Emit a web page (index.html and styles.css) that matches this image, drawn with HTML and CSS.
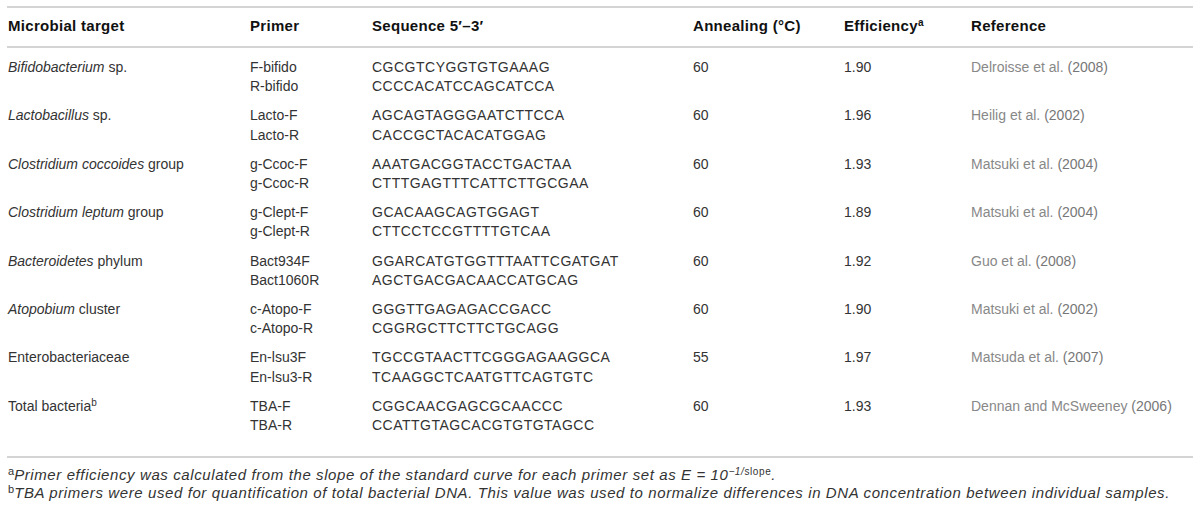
FILE: index.html
```html
<!doctype html>
<html>
<head>
    <title>Primers used for qPCR</title>
    <meta http-equiv="Content-Type" content="text/html; charset=utf-8" />
    <link rel="stylesheet" href="styles.css">
</head>
<body>
<table class="primers">
    <thead>
        <tr>
            <th class="c-target">Microbial target</th>
            <th class="c-primer">Primer</th>
            <th class="c-seq">Sequence 5&prime;&ndash;3&prime;</th>
            <th class="c-ann">Annealing (&deg;C)</th>
            <th class="c-eff">Efficiency<sup>a</sup></th>
            <th class="c-ref">Reference</th>
        </tr>
    </thead>
    <tbody>
        <tr class="first">
            <td><i>Bifidobacterium</i> sp.</td>
            <td>F-bifido<br/>R-bifido</td>
            <td class="seq">CGCGTCYGGTGTGAAAG<br/>CCCCACATCCAGCATCCA</td>
            <td>60</td>
            <td>1.90</td>
            <td class="ref">Delroisse et al. <span>(2008)</span></td>
        </tr>
        <tr>
            <td><i>Lactobacillus</i> sp.</td>
            <td>Lacto-F<br/>Lacto-R</td>
            <td class="seq">AGCAGTAGGGAATCTTCCA<br/>CACCGCTACACATGGAG</td>
            <td>60</td>
            <td>1.96</td>
            <td class="ref">Heilig et al. <span>(2002)</span></td>
        </tr>
        <tr>
            <td><i>Clostridium coccoides</i> group</td>
            <td>g-Ccoc-F<br/>g-Ccoc-R</td>
            <td class="seq">AAATGACGGTACCTGACTAA<br/>CTTTGAGTTTCATTCTTGCGAA</td>
            <td>60</td>
            <td>1.93</td>
            <td class="ref">Matsuki et al. <span>(2004)</span></td>
        </tr>
        <tr>
            <td><i>Clostridium leptum</i> group</td>
            <td>g-Clept-F<br/>g-Clept-R</td>
            <td class="seq">GCACAAGCAGTGGAGT<br/>CTTCCTCCGTTTTGTCAA</td>
            <td>60</td>
            <td>1.89</td>
            <td class="ref">Matsuki et al. <span>(2004)</span></td>
        </tr>
        <tr>
            <td><i>Bacteroidetes</i> phylum</td>
            <td>Bact934F<br/>Bact1060R</td>
            <td class="seq">GGARCATGTGGTTTAATTCGATGAT<br/>AGCTGACGACAACCATGCAG</td>
            <td>60</td>
            <td>1.92</td>
            <td class="ref">Guo et al. <span>(2008)</span></td>
        </tr>
        <tr>
            <td><i>Atopobium</i> cluster</td>
            <td>c-Atopo-F<br/>c-Atopo-R</td>
            <td class="seq">GGGTTGAGAGACCGACC<br/>CGGRGCTTCTTCTGCAGG</td>
            <td>60</td>
            <td>1.90</td>
            <td class="ref">Matsuki et al. <span>(2002)</span></td>
        </tr>
        <tr>
            <td>Enterobacteriaceae</td>
            <td>En-lsu3F<br/>En-lsu3-R</td>
            <td class="seq">TGCCGTAACTTCGGGAGAAGGCA<br/>TCAAGGCTCAATGTTCAGTGTC</td>
            <td>55</td>
            <td>1.97</td>
            <td class="ref">Matsuda et al. <span>(2007)</span></td>
        </tr>
        <tr class="last">
            <td>Total bacteria<sup>b</sup></td>
            <td>TBA-F<br/>TBA-R</td>
            <td class="seq">CGGCAACGAGCGCAACCC<br/>CCATTGTAGCACGTGTGTAGCC</td>
            <td>60</td>
            <td>1.93</td>
            <td class="ref">Dennan and McSweeney <span>(2006)</span></td>
        </tr>
    </tbody>
</table>
<div class="notes">
    <p><sup>a</sup><i>Primer efficiency was calculated from the slope of the standard curve for each primer set as E = 10<sup>&minus;1/</sup><sup class="up">slope</sup>.</i></p>
    <p><sup>b</sup><i>TBA primers were used for quantification of total bacterial DNA. This value was used to normalize differences in DNA concentration between individual samples.</i></p>
</div>
</body>
</html>
```

FILE: styles.css
```css
body           { margin:6px 7px; background:#fff; color:#333; font-family:"Liberation Sans", Arial, sans-serif; font-size:14px; }
.primers       { width:1186px; table-layout:fixed; border-collapse:collapse; border-top:2px solid #d4d4d4; border-bottom:2px solid #d4d4d4; }
.primers th    { text-align:left; font-weight:bold; font-size:15px; letter-spacing:0.3px; color:#111; padding:9px 0 11px 1px; line-height:18px; border-bottom:2px solid #d4d4d4; }
.primers td    { vertical-align:top; padding:4px 0 6px 1px; line-height:19.2px; }
.primers tr.first td { padding-top:10px; }
.primers tr.last td  { padding-bottom:21px; }
.c-target      { width:241px; }
.c-primer      { width:121px; }
.c-seq         { width:320px; }
.c-ann         { width:150px; }
.c-eff         { width:126px; }
.seq           { letter-spacing:0.5px; }
sup            { font-size:10px; line-height:0; vertical-align:5px; }
th sup         { letter-spacing:0; }
.ref           { color:#888; }
.ref span      { color:#777; }
.notes         { padding:8px 0 0 1px; }
.notes p       { margin:0; height:18px; line-height:18px; font-size:15px; letter-spacing:0.6px; }
.notes p > sup { font-size:11px; letter-spacing:0; }
.notes sup sup, .notes sup.up { font-style:normal; }
```
